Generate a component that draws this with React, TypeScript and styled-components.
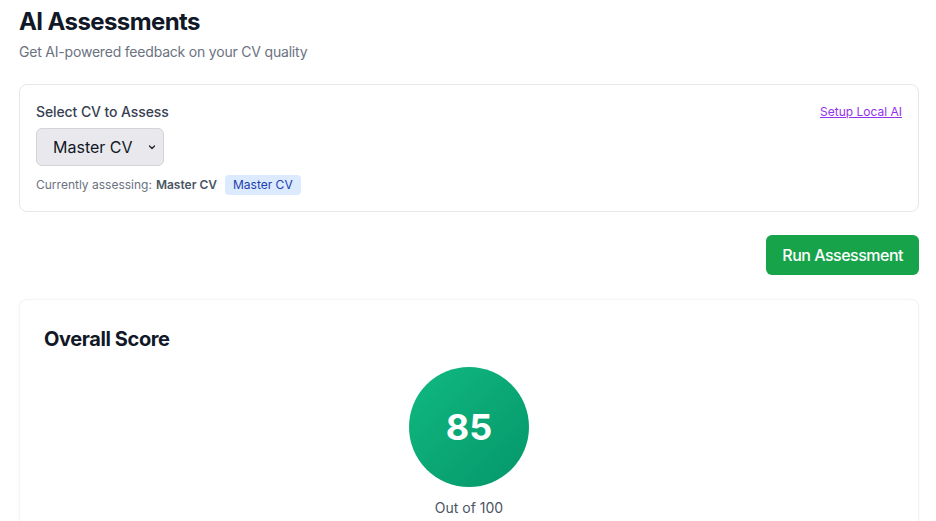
import styled, { createGlobalStyle } from "styled-components";

const GlobalStyle = createGlobalStyle`
  * {
    box-sizing: border-box;
  }
  body {
    margin: 0;
    background-color: #fff;
    font-family: Inter, "Noto Sans", "Liberation Sans", sans-serif;
    color: #111827;
  }
`;

const Page = styled.main`
  padding: 6px 17px 0 19px;
`;

const Title = styled.h1`
  margin: 0;
  font-size: 24px;
  line-height: 32px;
  font-weight: 700;
  letter-spacing: -0.6px;
  color: #111827;
`;

const Subtitle = styled.p`
  margin: 4px 0 22px;
  font-size: 14px;
  line-height: 20px;
  letter-spacing: -0.2px;
  color: #6b7280;
`;

const Card = styled.section`
  border: 1px solid #e5e7eb;
  border-radius: 8px;
  padding: 17px 16px 16px;
  background-color: #fff;
`;

const CardHead = styled.div`
  display: flex;
  justify-content: space-between;
  align-items: center;
  margin-bottom: 6px;
`;

const Label = styled.label`
  font-size: 14px;
  line-height: 20px;
  font-weight: 500;
  letter-spacing: -0.1px;
  color: #374151;
`;

const SetupLink = styled.a`
  font-size: 12px;
  line-height: 16px;
  color: #9333ea;
  text-decoration: underline;
`;

const SelectWrap = styled.div`
  position: relative;
  display: inline-block;
`;

const Select = styled.select`
  appearance: none;
  -webkit-appearance: none;
  width: 128px;
  height: 38px;
  padding: 0 16px;
  border: 1px solid #d4d4d8;
  border-radius: 6px;
  background-color: #e9e9ed;
  font-family: inherit;
  font-size: 16px;
  color: #111827;
`;

const Chevron = styled.svg`
  position: absolute;
  right: 7px;
  top: 50%;
  width: 10px;
  height: 10px;
  transform: translateY(-50%);
  pointer-events: none;
`;

const Current = styled.div`
  display: flex;
  align-items: center;
  margin-top: 9px;
  font-size: 12px;
  line-height: 16px;
  color: #6b7280;
`;

const Strong = styled.strong`
  margin-left: 4px;
  font-weight: 600;
  color: #4b5563;
`;

const Badge = styled.span`
  margin-left: 8px;
  padding: 2px 8px;
  border-radius: 4px;
  background-color: #dbeafe;
  color: #1e40af;
  font-size: 12px;
  line-height: 16px;
`;

const Actions = styled.div`
  display: flex;
  justify-content: flex-end;
  margin: 23px 0 24px;
`;

const RunButton = styled.button`
  height: 40px;
  padding: 0 16px;
  border: none;
  border-radius: 6px;
  background-color: #16a34a;
  color: #fff;
  font-family: inherit;
  font-size: 16px;
  font-weight: 500;
  letter-spacing: -0.5px;
  cursor: pointer;
`;

const ScoreCard = styled.section`
  border: 1px solid #f3f4f6;
  border-radius: 8px;
  padding: 25px 24px 24px;
  background-color: #fff;
  box-shadow: 0 1px 3px rgba(0, 0, 0, 0.05);
`;

const ScoreTitle = styled.h2`
  margin: 0 0 14px;
  font-size: 20px;
  line-height: 28px;
  font-weight: 700;
  letter-spacing: -0.4px;
  color: #111827;
`;

const ScoreBody = styled.div`
  display: flex;
  flex-direction: column;
  align-items: center;
`;

const Circle = styled.div`
  display: flex;
  align-items: center;
  justify-content: center;
  width: 120px;
  height: 120px;
  border-radius: 50%;
  background: linear-gradient(135deg, #10b981, #059669);
  color: #fff;
  font-size: 36px;
  font-weight: 700;
`;

const OutOf = styled.p`
  margin: 11px 0 0;
  font-size: 14px;
  line-height: 20px;
  color: #4b5563;
`;

const App = () => {
  return (
    <>
      <GlobalStyle />
      <Page>
        <Title>AI Assessments</Title>
        <Subtitle>Get AI-powered feedback on your CV quality</Subtitle>

        <Card>
          <CardHead>
            <Label htmlFor="cv">Select CV to Assess</Label>
            <SetupLink href="#">Setup Local AI</SetupLink>
          </CardHead>
          <SelectWrap>
            <Select id="cv" defaultValue="master">
              <option value="master">Master CV</option>
            </Select>
            <Chevron viewBox="0 0 10 10">
              <path d="M2.5 4 L5 6.5 L7.5 4" fill="none" stroke="#222" strokeWidth="1.3" strokeLinecap="round" strokeLinejoin="round" />
            </Chevron>
          </SelectWrap>
          <Current>
            Currently assessing:<Strong>Master CV</Strong>
            <Badge>Master CV</Badge>
          </Current>
        </Card>

        <Actions>
          <RunButton>Run Assessment</RunButton>
        </Actions>

        <ScoreCard>
          <ScoreTitle>Overall Score</ScoreTitle>
          <ScoreBody>
            <Circle>85</Circle>
            <OutOf>Out of 100</OutOf>
          </ScoreBody>
        </ScoreCard>
      </Page>
    </>
  );
};

export default App;
